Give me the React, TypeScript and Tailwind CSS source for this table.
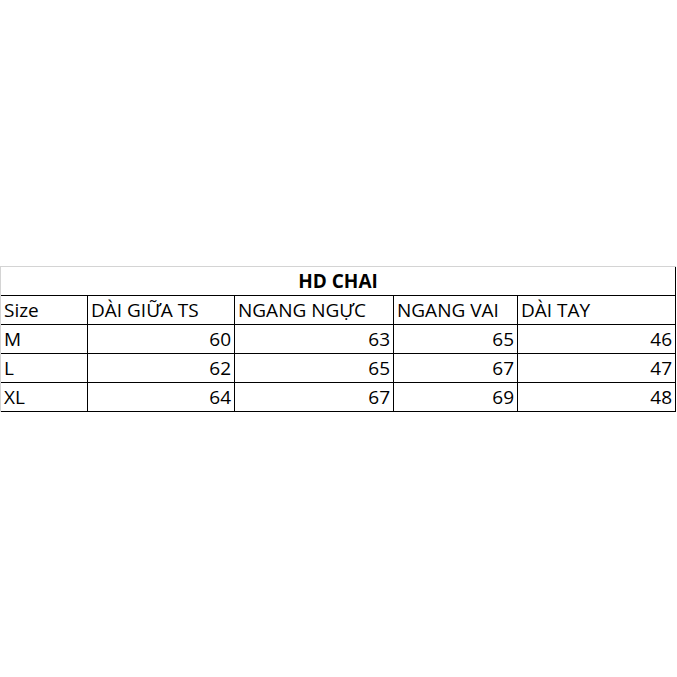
import React from "react";

const headers = ["Size", "DÀI GIỮA TS", "NGANG NGỰC", "NGANG VAI", "DÀI TAY"];
const rows: [string, number, number, number, number][] = [
  ["M", 60, 63, 65, 46],
  ["L", 62, 65, 67, 47],
  ["XL", 64, 67, 69, 48],
];

export default function App() {
  return (
    <div className="min-h-[677px] w-[677px] bg-white flex items-center" style={{ fontFamily: '"Open Sans", "Liberation Sans", Arial, sans-serif' }}>
      <div className="w-[676px] border-l border-t border-l-[#d4d4d4] border-t-[#d4d4d4] text-black text-[19px]">
        <div className="h-[29px] border-b border-r border-black flex items-start justify-center pt-[1px] font-bold leading-[26px]">
          HD CHAI
        </div>
        <div className="grid grid-cols-[87px_147px_159px_124px_158px]">
          {headers.map((h) => (
            <div key={h} className="h-[29px] border-b border-r border-black pl-[3px] pt-[1px] leading-[26px] whitespace-nowrap">
              {h}
            </div>
          ))}
          {rows.map((r) => (
            <React.Fragment key={r[0]}>
              <div className="h-[29px] border-b border-r border-black pl-[3px] pt-[1px] leading-[26px]">{r[0]}</div>
              {r.slice(1).map((v, j) => (
                <div key={j} className="h-[29px] border-b border-r border-black pr-[3px] pt-[1px] leading-[26px] text-right">
                  {v}
                </div>
              ))}
            </React.Fragment>
          ))}
        </div>
      </div>
    </div>
  );
}
